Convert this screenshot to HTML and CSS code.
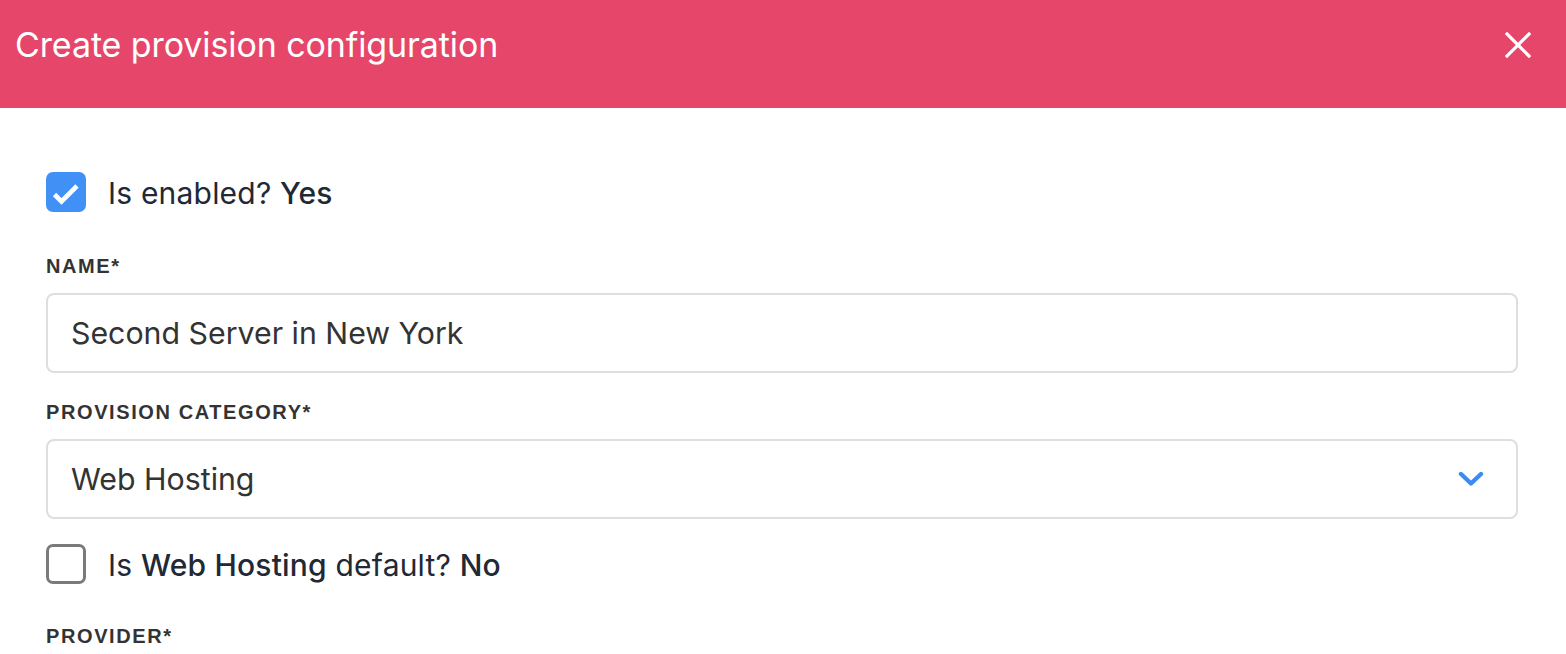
FILE: index.html
```html
<!DOCTYPE html>
<html lang="en">
<head>
<meta charset="utf-8">
<title>Create provision configuration</title>
<link rel="stylesheet" href="styles.css">
</head>
<body>
<header class="modal-header">
  <h1 class="modal-title">Create provision configuration</h1>
  <button class="close-btn" aria-label="Close">
    <svg width="26" height="26" viewBox="0 0 26 26"><path d="M2 2 L24 24 M24 2 L2 24" stroke="#fff" stroke-width="3.2" stroke-linecap="square" fill="none"/></svg>
  </button>
</header>
<main class="modal-body">
  <div class="check-row">
    <span class="checkbox checked">
      <svg width="40" height="40" viewBox="0 0 40 40"><path d="M8.5 22.5 L15.5 29.5 L31 14" stroke="#fff" stroke-width="4.6" stroke-linecap="butt" stroke-linejoin="miter" fill="none"/></svg>
    </span>
    <span class="check-text">Is enabled? <b>Yes</b></span>
  </div>

  <label class="field-label first">NAME*</label>
  <div class="input">Second Server in New York</div>

  <label class="field-label">PROVISION CATEGORY*</label>
  <div class="input select">
    <span>Web Hosting</span>
    <svg class="chevron" width="26" height="16" viewBox="0 0 26 16"><path d="M3 3 L13 12.5 L23 3" stroke="#3d8bf2" stroke-width="4.4" stroke-linecap="round" stroke-linejoin="round" fill="none"/></svg>
  </div>

  <div class="check-row second">
    <span class="checkbox"></span>
    <span class="check-text">Is <b>Web Hosting</b> default? <b>No</b></span>
  </div>

  <label class="field-label provider">PROVIDER*</label>
</main>
</body>
</html>
```

FILE: styles.css
```css
* { box-sizing: border-box; }

html, body {
  margin: 0;
  padding: 0;
  background: #ffffff;
  font-family: Inter, "Noto Sans", "Liberation Sans", sans-serif;
  overflow: hidden;
}

.modal-header {
  height: 108px;
  background: #e6466a;
  display: flex;
  align-items: center;
  justify-content: space-between;
  padding: 0 35px 18px 15px;
}

.modal-title {
  margin: 0;
  color: #ffffff;
  font-size: 34px;
  font-weight: 400;
  line-height: 40px;
  letter-spacing: -0.1px;
}

.close-btn {
  background: none;
  border: 0;
  padding: 0;
  width: 26px;
  height: 26px;
  display: flex;
  cursor: pointer;
}

.modal-body {
  padding: 64px 48px 0 46px;
}

.check-row {
  display: flex;
  align-items: center;
  height: 40px;
  gap: 22px;
}

.check-row.second {
  margin-top: 25px;
}

.checkbox {
  width: 40px;
  height: 40px;
  flex: none;
  border-radius: 7px;
  border: 3px solid #7a7a7a;
  background: #fff;
  display: flex;
}

.checkbox.checked {
  border: 0;
  background: #4190f5;
}

.check-text {
  font-size: 30px;
  letter-spacing: 0.2px;
  color: #212836;
  font-weight: 400;
  padding-top: 2px;
}

.check-text b {
  font-weight: 500;
}

.field-label {
  display: block;
  margin-top: 27px;
  margin-bottom: 15px;
  font-family: "Liberation Sans", Arial, sans-serif;
  font-weight: 700;
  font-size: 20px;
  line-height: 24px;
  letter-spacing: 1.6px;
  color: #333333;
}

.field-label.first {
  margin-top: 42px;
}

.field-label.provider {
  margin-top: 40px;
}

.input {
  height: 80px;
  border: 2px solid #dedede;
  border-radius: 8px;
  padding: 0 23px;
  display: flex;
  align-items: center;
  font-size: 30.3px;
  color: #333333;
}

.input.select {
  justify-content: space-between;
  padding-right: 32px;
}

.chevron {
  display: block;
}
```
